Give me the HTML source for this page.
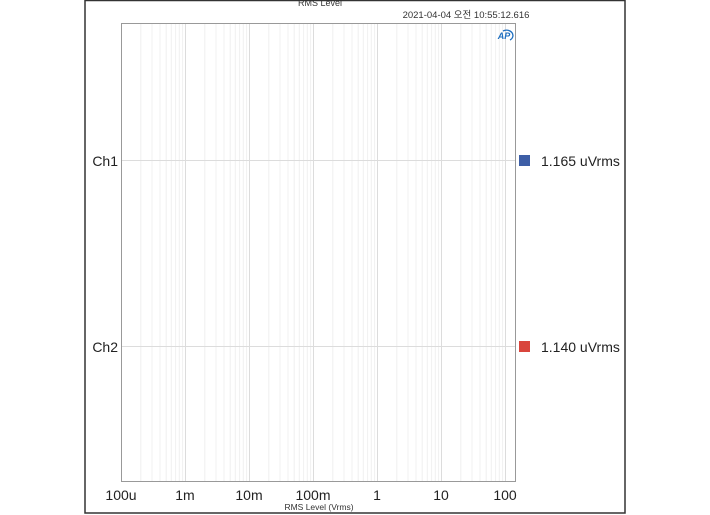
<!DOCTYPE html>
<html><head><meta charset="utf-8"><style>
html,body{margin:0;padding:0;background:#fff;width:710px;height:515px;overflow:hidden}
svg{display:block}
text{font-family:"Liberation Sans","Noto Sans CJK KR",sans-serif}
</style></head><body>
<svg width="710" height="515" viewBox="0 0 710 515">
<rect x="85" y="0.5" width="540" height="512.5" fill="#fff" stroke="#333" stroke-width="1.5"/>
<text x="320" y="6" font-size="9" fill="#333" text-anchor="middle">RMS Level</text>
<text x="466" y="18" font-size="9.5" fill="#333" text-anchor="middle">2021-04-04 오전 10:55:12.616</text>
<g stroke="#f0f0f0" stroke-width="1">
<g id="d">
<line x1="140.8" y1="23" x2="140.8" y2="481"/><line x1="152" y1="23" x2="152" y2="481"/><line x1="160" y1="23" x2="160" y2="481"/><line x1="166.2" y1="23" x2="166.2" y2="481"/><line x1="171.3" y1="23" x2="171.3" y2="481"/><line x1="175.6" y1="23" x2="175.6" y2="481"/><line x1="179.3" y1="23" x2="179.3" y2="481"/><line x1="182.6" y1="23" x2="182.6" y2="481"/>
</g>
<use href="#d" x="64"/><use href="#d" x="128"/><use href="#d" x="192"/><use href="#d" x="256"/><use href="#d" x="320"/>
</g>
<g stroke="#dcdcdc" stroke-width="1">
<line x1="185.5" y1="23" x2="185.5" y2="481"/><line x1="249.5" y1="23" x2="249.5" y2="481"/><line x1="313.5" y1="23" x2="313.5" y2="481"/><line x1="377.5" y1="23" x2="377.5" y2="481"/><line x1="441.5" y1="23" x2="441.5" y2="481"/><line x1="505.5" y1="23" x2="505.5" y2="481"/>
<line x1="121" y1="160.5" x2="516" y2="160.5"/><line x1="121" y1="346.5" x2="516" y2="346.5"/>
</g>
<rect x="121.5" y="23.5" width="394" height="458" fill="none" stroke="#999" stroke-width="1"/>
<text x="504" y="39" font-size="9" font-weight="bold" font-style="italic" fill="#1f6fc0" text-anchor="middle">AP</text>
<path d="M503 31 a6 5 0 0 1 7 9" fill="none" stroke="#1f6fc0" stroke-width="1.3"/>
<text x="118" y="166" font-size="14" fill="#222" text-anchor="end">Ch1</text>
<text x="118" y="352" font-size="14" fill="#222" text-anchor="end">Ch2</text>
<rect x="519" y="155" width="11" height="11" fill="#3d5ea6"/>
<rect x="519" y="341" width="11" height="11" fill="#d9453c"/>
<text x="541" y="166" font-size="14" fill="#222">1.165 uVrms</text>
<text x="541" y="352" font-size="14" fill="#222">1.140 uVrms</text>
<g font-size="14" fill="#222" text-anchor="middle">
<text x="121" y="500">100u</text><text x="185" y="500">1m</text><text x="249" y="500">10m</text><text x="313" y="500">100m</text><text x="377" y="500">1</text><text x="441" y="500">10</text><text x="505" y="500">100</text>
</g>
<text x="319" y="510" font-size="8.5" fill="#333" text-anchor="middle">RMS Level (Vrms)</text>
</svg>
</body></html>
